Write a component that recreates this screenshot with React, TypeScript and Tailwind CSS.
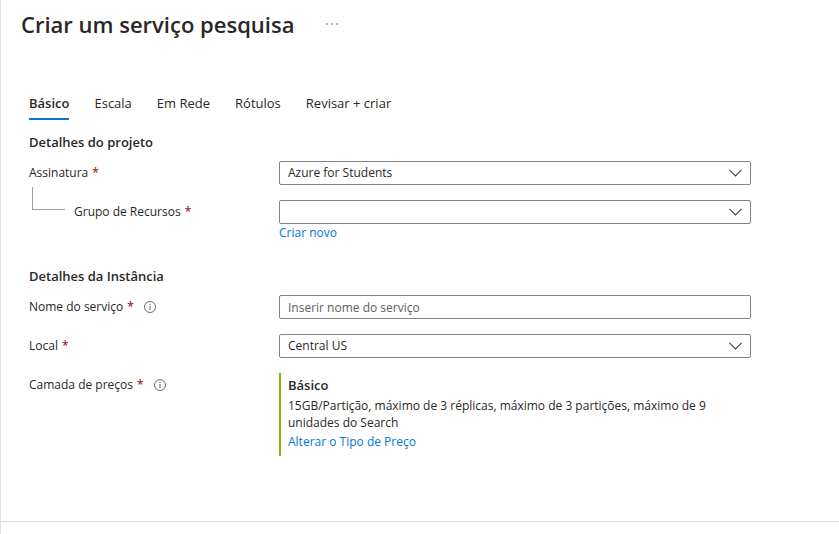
import type { ReactNode } from "react";

const tabs = ["Básico", "Escala", "Em Rede", "Rótulos", "Revisar + criar"];

function Required() {
  return <span className="ml-1 font-semibold text-[#a4262c]">*</span>;
}

function InfoButton({ label }: { label: string }) {
  return (
    <button type="button" aria-label={label} className="ml-2.5 shrink-0">
      <svg width="12" height="12" viewBox="0 0 12 12" fill="none" stroke="#605e5c">
        <circle cx="6" cy="6" r="5.5" strokeWidth="0.9" />
        <path d="M6 5v4" strokeWidth="1" />
        <path d="M6 3v1" strokeWidth="1" />
      </svg>
    </button>
  );
}

function SelectBox({ id, options }: { id: string; options: string[] }) {
  return (
    <div className="relative">
      <select
        id={id}
        className="block h-6 w-full appearance-none rounded-xs border border-[#858381] bg-white pr-8 pl-2 leading-5 outline-none"
      >
        {options.map((option) => (
          <option key={option}>{option}</option>
        ))}
      </select>
      <svg
        className="pointer-events-none absolute top-2 right-[9px]"
        width="13"
        height="8"
        viewBox="0 0 13 8"
        fill="none"
        stroke="#484644"
        strokeWidth="1.1"
      >
        <path d="M0.4 0.9L6.5 7L12.6 0.9" />
      </svg>
    </div>
  );
}

function Row({ label, children }: { label: ReactNode; children: ReactNode }) {
  return (
    <div className="flex items-start">
      <div className="flex h-6 w-[250px] shrink-0 items-center">{label}</div>
      <div className="min-w-0 flex-1">{children}</div>
    </div>
  );
}

export default function App() {
  return (
    <div className="flex min-h-screen flex-col border-l border-[#e1dfdd] bg-white font-['Open_Sans','Noto_Sans',sans-serif] text-[13px] leading-5 text-[#292827]">
      <header className="flex h-12 items-center gap-7 pl-5">
        <h1 className="text-[22px] leading-8 font-semibold">Criar um serviço pesquisa</h1>
        <button type="button" aria-label="Mais opções" className="p-1">
          <svg width="12" height="2" viewBox="0 0 12 2" fill="#605e5c">
            <circle cx="1" cy="1" r="0.8" />
            <circle cx="6" cy="1" r="0.8" />
            <circle cx="11" cy="1" r="0.8" />
          </svg>
        </button>
      </header>

      <main className="flex-1 px-7 pt-11">
        <nav role="tablist" className="flex gap-[25px]">
          {tabs.map((tab, index) => (
            <button
              key={tab}
              type="button"
              role="tab"
              aria-selected={index === 0}
              className={
                index === 0
                  ? "h-7 border-b-2 border-[#0078d4] pb-1 font-semibold"
                  : "h-7 border-b-2 border-transparent pb-1"
              }
            >
              {tab}
            </button>
          ))}
        </nav>

        <form className="w-full max-w-[722px] pt-3">
          <section>
            <h2 className="font-semibold">Detalhes do projeto</h2>
            <div className="mt-[9px] flex flex-col gap-[15px] text-xs">
              <Row
                label={
                  <label htmlFor="subscription">
                    Assinatura
                    <Required />
                  </label>
                }
              >
                <SelectBox id="subscription" options={["Azure for Students"]} />
              </Row>
              <Row
                label={
                  <>
                    <span className="mr-[9px] mb-[27px] ml-[3px] h-[23px] w-[33px] border-b border-l border-[#a19f9d]" />
                    <label htmlFor="resource-group">
                      Grupo de Recursos
                      <Required />
                    </label>
                  </>
                }
              >
                <SelectBox id="resource-group" options={[""]} />
                <a href="#criar-novo" className="block w-fit leading-[18px] text-[#0078d4]">
                  Criar novo
                </a>
              </Row>
            </div>
          </section>

          <section className="mt-6">
            <h2 className="font-semibold">Detalhes da Instância</h2>
            <div className="mt-[9px] flex flex-col gap-[15px] text-xs">
              <Row
                label={
                  <>
                    <label htmlFor="service-name">
                      Nome do serviço
                      <Required />
                    </label>
                    <InfoButton label="Informações sobre o nome do serviço" />
                  </>
                }
              >
                <input
                  id="service-name"
                  type="text"
                  placeholder="Inserir nome do serviço"
                  className="block h-6 w-full rounded-xs border border-[#858381] bg-white px-2 leading-5 outline-none placeholder:text-[#605e5c]"
                />
              </Row>
              <Row
                label={
                  <label htmlFor="location">
                    Local
                    <Required />
                  </label>
                }
              >
                <SelectBox id="location" options={["Central US"]} />
              </Row>
              <Row
                label={
                  <>
                    <span>
                      Camada de preços
                      <Required />
                    </span>
                    <InfoButton label="Informações sobre a camada de preços" />
                  </>
                }
              >
                <div className="border-l-2 border-[#7fba00] pt-[2px] pb-[3px] pl-[7px]">
                  <strong className="block text-[13px] leading-5 font-semibold">Básico</strong>
                  <p className="max-w-[440px] pt-[2px] leading-[17px]">
                    15GB/Partição, máximo de 3 réplicas, máximo de 3 partições, máximo de 9 unidades do Search
                  </p>
                  <a href="#alterar" className="block w-fit leading-[22px] text-[#0078d4]">
                    Alterar o Tipo de Preço
                  </a>
                </div>
              </Row>
            </div>
          </section>
        </form>
      </main>

      <footer className="h-[13px] border-t border-[#dcdcdc]" />
    </div>
  );
}
